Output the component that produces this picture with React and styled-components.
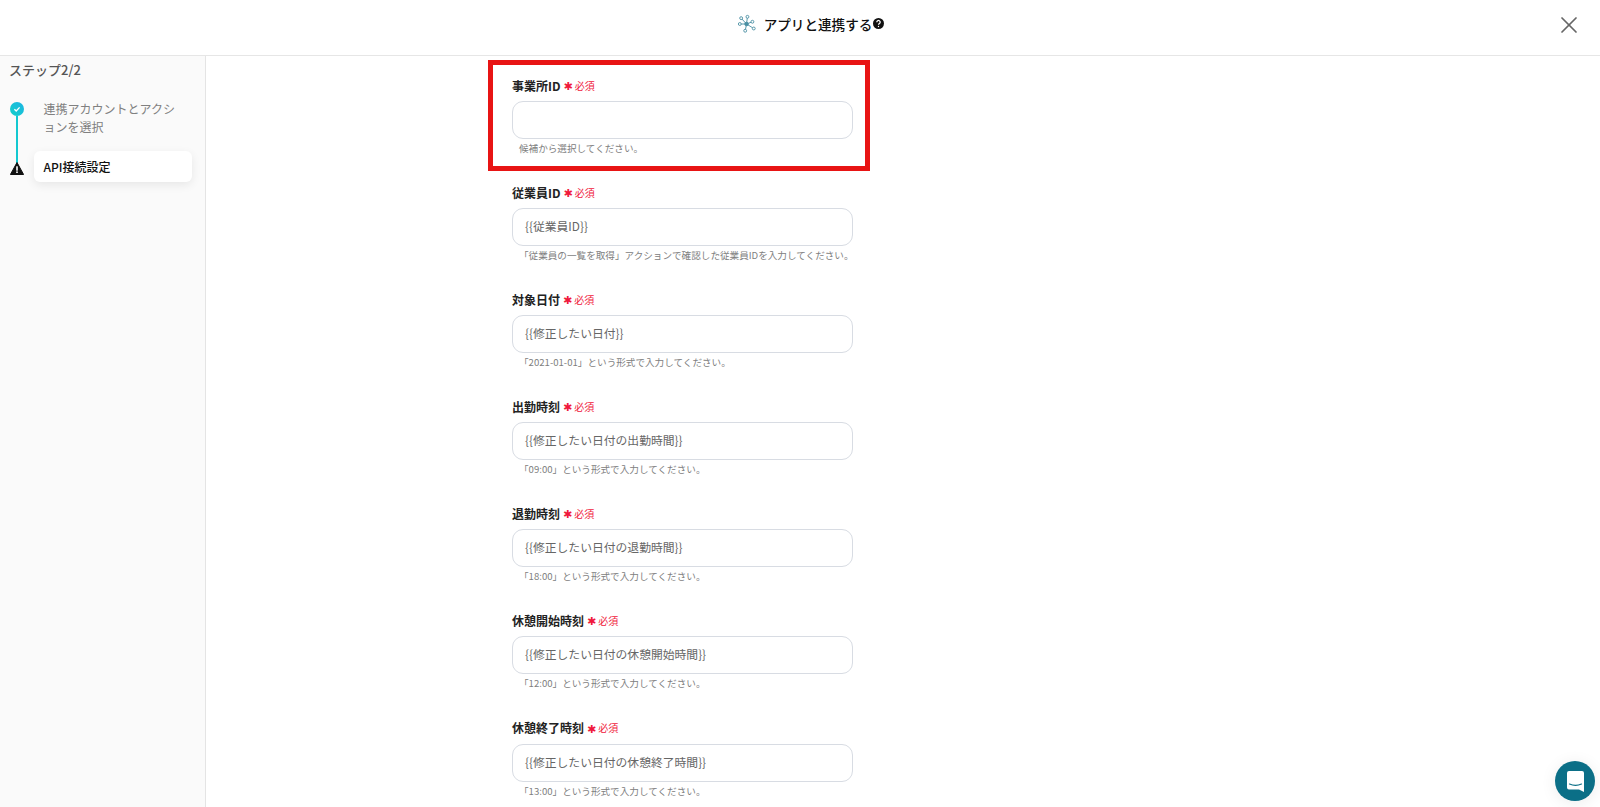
import styled, { createGlobalStyle } from "styled-components";
import { X } from "lucide-react";

const GlobalStyle = createGlobalStyle`
  html, body {
    margin: 0;
    height: 100%;
    overflow: hidden;
    background: #fff;
    font-family: "Noto Sans CJK JP", "Noto Sans", sans-serif;
  }
`;

const Page = styled.div`
  position: relative;
  height: 100vh;
  display: flex;
  flex-direction: column;
  overflow: hidden;
`;

const Header = styled.header`
  flex: none;
  position: relative;
  height: 47px;
  padding: 0 0 8px 22px;
  display: flex;
  align-items: center;
  justify-content: center;
  border-bottom: 1px solid #e6e6e6;
  box-sizing: content-box;
`;

const Title = styled.h1`
  margin: 0;
  display: flex;
  align-items: center;
  font-size: 13.6px;
  font-weight: 500;
  color: #111;
  line-height: 20px;
`;

const CloseButton = styled.button`
  position: absolute;
  right: 16px;
  top: 10px;
  width: 30px;
  height: 30px;
  padding: 0;
  display: flex;
  align-items: center;
  justify-content: center;
  border: 0;
  background: none;
  color: #666;
`;

const Body = styled.div`
  flex: 1;
  min-height: 0;
  display: flex;
`;

const Sidebar = styled.aside`
  flex: none;
  width: 206px;
  box-sizing: border-box;
  background: #fafafa;
  border-right: 1px solid #e4e4e4;
  padding: 5px 13px 0 10px;
`;

const StepHeading = styled.div`
  margin: 0 0 23px -1px;
  font-size: 13px;
  line-height: 18px;
  font-weight: 500;
  color: #555;
`;

const StepRow = styled.div`
  position: relative;
  display: flex;
  align-items: ${(p) => (p.$active ? "center" : "flex-start")};
  gap: 10px;
`;

const StepMarker = styled.div`
  flex: none;
  width: 14px;
  margin-left: -0.5px;
  display: flex;
  justify-content: center;
  margin-top: ${(p) => p.$top || 0}px;
`;

const Connector = styled.div`
  position: absolute;
  left: 5.5px;
  top: 14px;
  width: 2px;
  height: 50px;
  background: #13c8d0;
`;

const StepText = styled.div`
  margin: -2px 0 0 10px;
  width: 132px;
  font-size: 12px;
  line-height: 18px;
  color: #808080;
  padding-bottom: 15px;
`;

const ActiveStep = styled.div`
  flex: 1;
  height: 31px;
  padding-left: 10px;
  display: flex;
  align-items: center;
  background: #fff;
  border-radius: 6px;
  box-shadow: 0 3px 10px rgba(0, 0, 0, 0.08);
  font-size: 12px;
  font-weight: 500;
  color: #111;
`;

const Main = styled.main`
  flex: 1;
  min-width: 0;
  padding: 21px 0 0 306px;
  display: flex;
  flex-direction: column;
`;

const Field = styled.div`
  flex: none;
  width: 341px;
  height: 107.1px;
`;

const LabelRow = styled.div`
  display: flex;
  align-items: center;
  gap: 3px;
  height: 16px;
  margin-bottom: 8px;
  font-size: 12px;
  font-weight: 700;
  color: #222;
`;

const Required = styled.span`
  display: flex;
  align-items: center;
  font-size: 10px;
  font-weight: 400;
  color: #f0193c;
`;

const Star = styled.span`
  font-family: "DejaVu Sans", sans-serif;
  font-size: 11px;
  line-height: 10px;
  margin: 4px 2px 0 0;
`;

const Input = styled.div`
  box-sizing: border-box;
  height: 38px;
  padding: 0 0 3px 12px;
  display: flex;
  align-items: center;
  border: 1px solid #d8dce3;
  border-radius: 11px;
  font-size: 11.8px;
  color: #666;
`;

const Hint = styled.div`
  margin: 2px 0 0 7px;
  font-size: 9.6px;
  line-height: 14px;
  color: #808080;
  white-space: nowrap;
`;

const Highlight = styled.div`
  position: absolute;
  left: 488px;
  top: 60px;
  width: 382px;
  height: 111px;
  box-sizing: border-box;
  border: 5px solid #e81414;
  pointer-events: none;
`;

const ChatButton = styled.div`
  position: absolute;
  right: 5px;
  bottom: 6px;
  width: 40px;
  height: 40px;
  border-radius: 50%;
  background: #0b6f87;
  display: flex;
  align-items: center;
  justify-content: center;
  box-shadow: 0 2px 16px rgba(0, 0, 0, 0.08);
`;

const fields = [
  { label: "事業所ID", value: "", hint: "候補から選択してください。" },
  { label: "従業員ID", value: "{{従業員ID}}", hint: "「従業員の一覧を取得」アクションで確認した従業員IDを入力してください。" },
  { label: "対象日付", value: "{{修正したい日付}}", hint: "「2021-01-01」という形式で入力してください。" },
  { label: "出勤時刻", value: "{{修正したい日付の出勤時間}}", hint: "「09:00」という形式で入力してください。" },
  { label: "退勤時刻", value: "{{修正したい日付の退勤時間}}", hint: "「18:00」という形式で入力してください。" },
  { label: "休憩開始時刻", value: "{{修正したい日付の休憩開始時間}}", hint: "「12:00」という形式で入力してください。" },
  { label: "休憩終了時刻", value: "{{修正したい日付の休憩終了時間}}", hint: "「13:00」という形式で入力してください。" },
];

const NetworkIcon = () => {
  const ends = [
    [10.5, 2], [16, 7.5], [17.5, 15], [8, 17.5], [2, 10], [3.5, 3.5],
  ];
  return (
    <svg width="18" height="20" viewBox="0 0 20 20" fill="none" stroke="#4a8fa3" strokeWidth="1" style={{ marginRight: 8 }}>
      {ends.map(([x, y]) => (
        <g key={`${x}-${y}`}>
          <line x1="9.500" y1="10" x2={x} y2={y} />
          <circle cx={x} cy={y} r="1.600" fill="#fff" />
        </g>
      ))}
      <circle cx="9.500" cy="10" r="2" fill="#4a8fa3" />
    </svg>
  );
};

const HelpIcon = () => (
  <svg width="11" height="11" viewBox="0 0 11 11" style={{ marginLeft: 1 }}>
    <circle cx="5.5" cy="5.5" r="5.5" fill="#111" />
    <path d="M3.8 4.2a1.7 1.7 0 1 1 2.6 1.4c-.6.4-.9.6-.9 1.2" fill="none" stroke="#fff" strokeWidth="1.2" />
    <circle cx="5.5" cy="8.5" r=".7" fill="#fff" />
  </svg>
);

const CheckMarker = () => (
  <svg width="14" height="14" viewBox="0 0 14 14">
    <defs>
      <linearGradient id="stepDone" x1="0" y1="1" x2="1" y2="0">
        <stop offset="0" stopColor="#12d0c8" />
        <stop offset="1" stopColor="#1cb4e4" />
      </linearGradient>
    </defs>
    <circle cx="7" cy="7" r="7" fill="url(#stepDone)" />
    <path d="M4.4 7.2 6.2 9l3.4-3.6" fill="none" stroke="#fff" strokeWidth="1.3" />
  </svg>
);

const WarningMarker = () => (
  <svg width="14" height="13" viewBox="0 0 14 13">
    <path d="M7 .5 13.6 12.5H.4Z" fill="#111" stroke="#111" strokeLinejoin="round" />
    <rect x="6.2" y="4.3" width="1.6" height="4.4" fill="#fff" />
    <rect x="6.2" y="9.4" width="1.6" height="1.6" fill="#fff" />
  </svg>
);

const ChatIcon = () => (
  <svg width="17" height="21" viewBox="0 0 17 21">
    <path d="M2 0h13a2 2 0 0 1 2 2v19l-5-2.500H2a2 2 0 0 1-2-2V2a2 2 0 0 1 2-2Z" fill="#fff" />
    <path d="M2.500 13c3.500 1.600 8.500 1.600 12 0" fill="none" stroke="#0b6f87" strokeWidth="1.200" strokeLinecap="round" />
  </svg>
);

const App = () => {
  return (
    <Page>
      <GlobalStyle />
      <Header>
        <Title>
          <NetworkIcon />
          アプリと連携する
          <HelpIcon />
        </Title>
        <CloseButton aria-label="閉じる">
          <X size={28} strokeWidth={1.5} />
        </CloseButton>
      </Header>
      <Body>
        <Sidebar>
          <StepHeading>ステップ2/2</StepHeading>
          <StepRow>
            <Connector />
            <StepMarker>
              <CheckMarker />
            </StepMarker>
            <StepText>連携アカウントとアクションを選択</StepText>
          </StepRow>
          <StepRow $active>
            <StepMarker $top={4}>
              <WarningMarker />
            </StepMarker>
            <ActiveStep>API接続設定</ActiveStep>
          </StepRow>
        </Sidebar>
        <Main>
          {fields.map((field) => (
            <Field key={field.label}>
              <LabelRow>
                {field.label}
                <Required>
                  <Star>✱</Star>必須
                </Required>
              </LabelRow>
              <Input>{field.value}</Input>
              <Hint>{field.hint}</Hint>
            </Field>
          ))}
        </Main>
      </Body>
      <Highlight />
      <ChatButton>
        <ChatIcon />
      </ChatButton>
    </Page>
  );
};

export default App;
